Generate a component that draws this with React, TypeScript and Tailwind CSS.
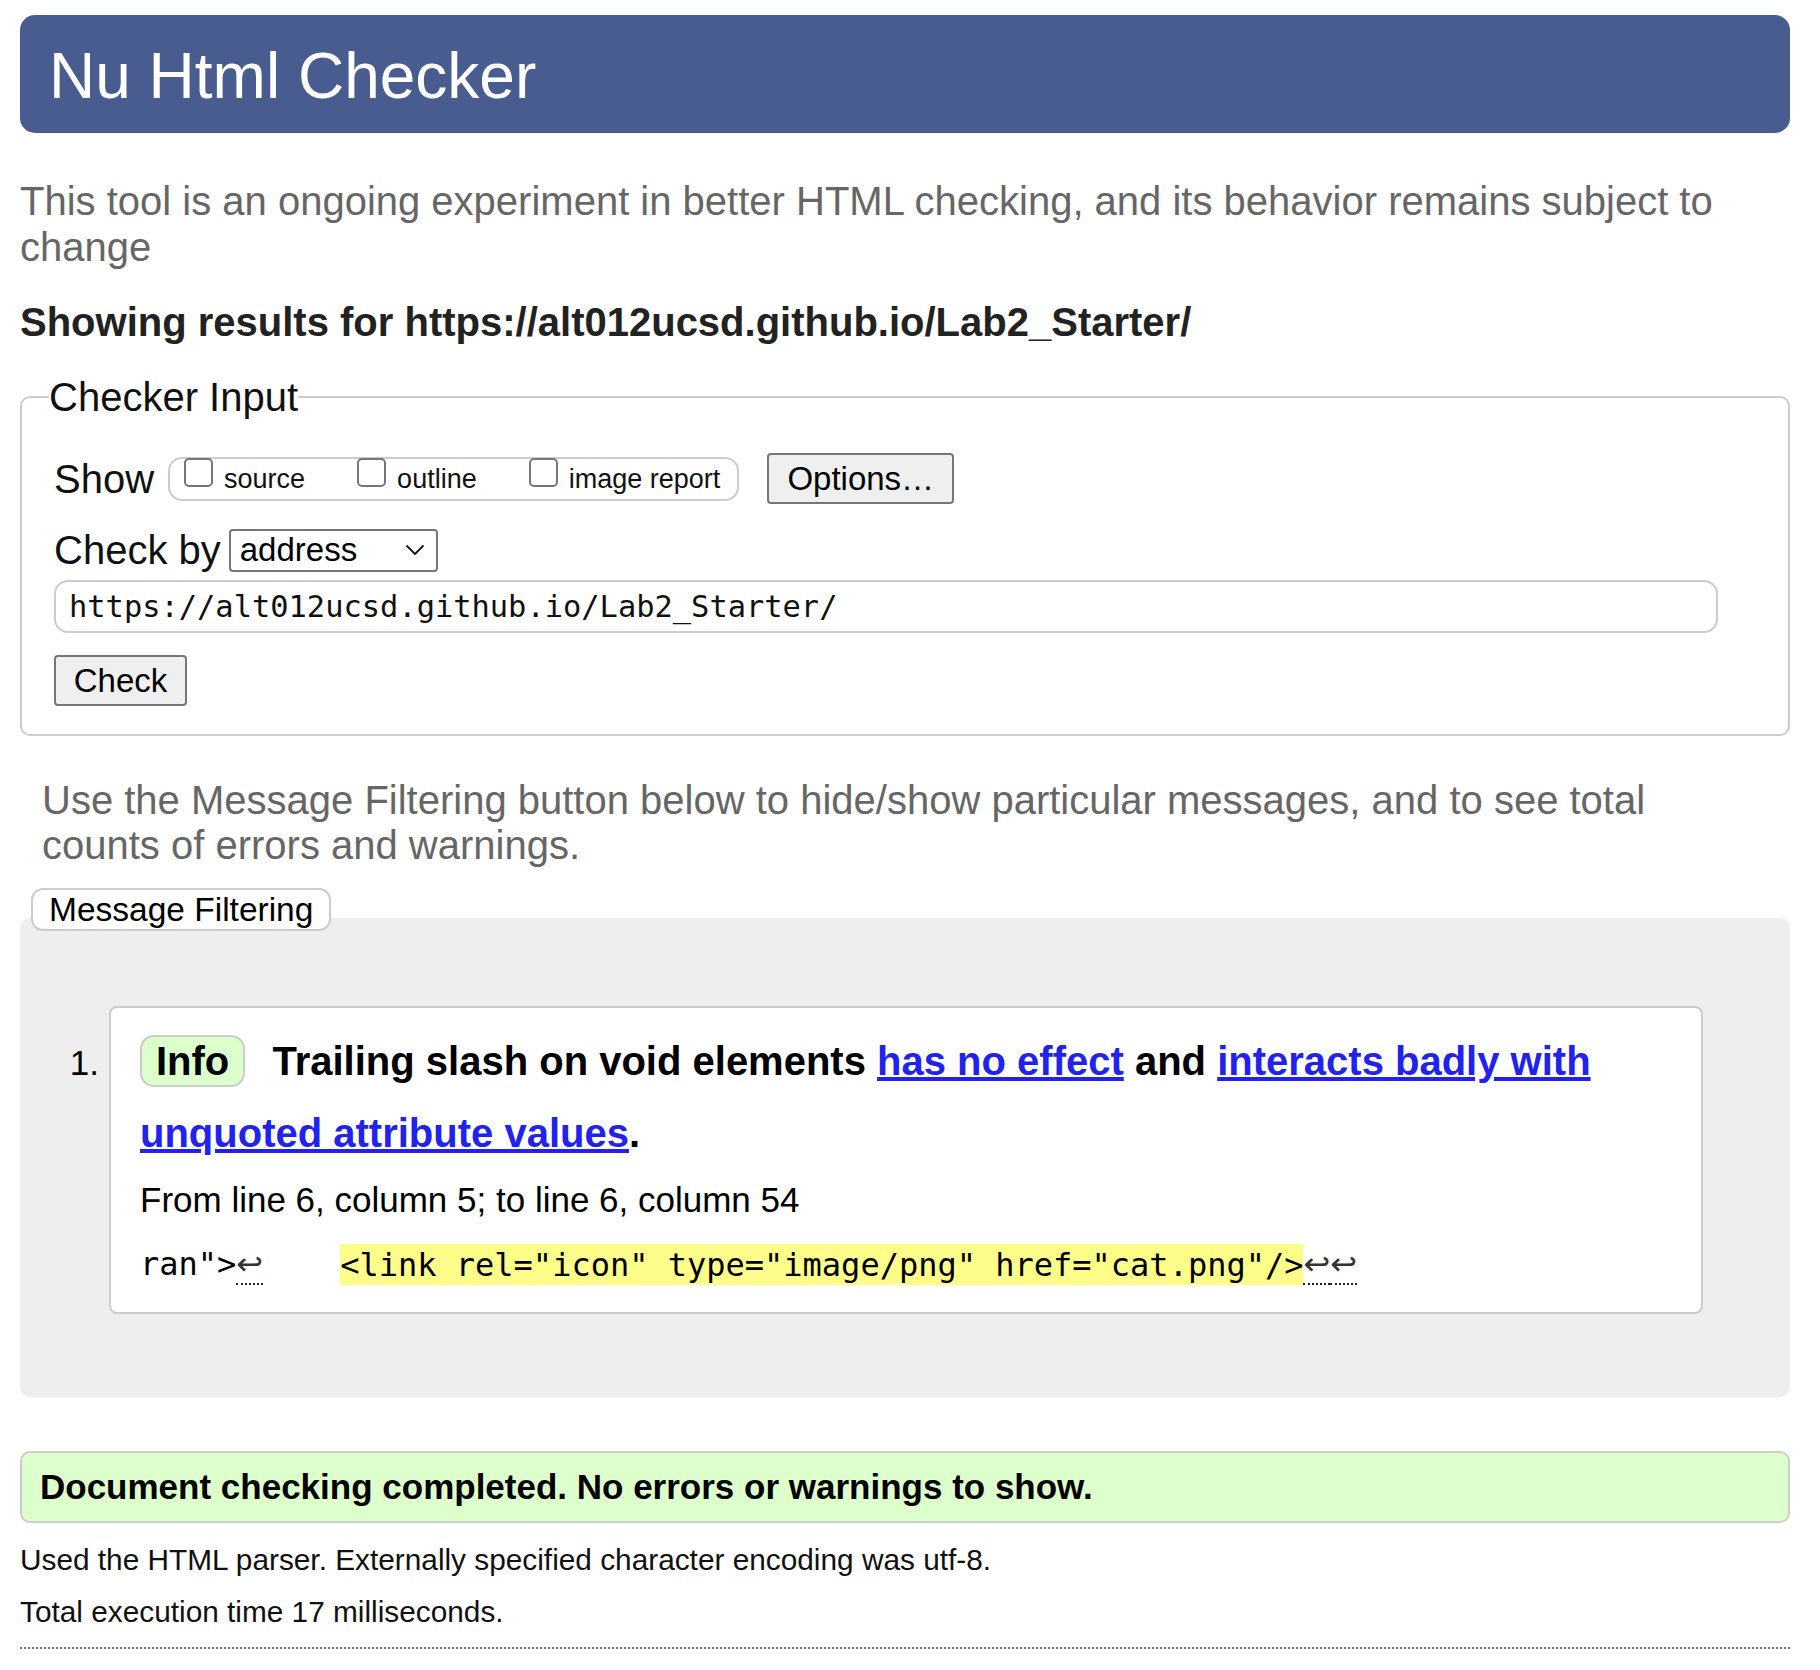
import React from "react";

const sans = "font-['Liberation_Sans',Arial,sans-serif]";
const mono = "font-['DejaVu_Sans_Mono',monospace]";

const ShowOption = ({ label, first }: { label: string; first?: boolean }) => (
  <label className={`flex items-start ${first ? "" : "ml-[52px]"}`}>
    <input
      type="checkbox"
      className="mt-[-1px] h-[29px] w-[29px] appearance-none rounded-[5px] border-2 border-[#767676] bg-white"
    />
    <span className="ml-[11px] mt-[5px] text-[27px] leading-[31px] text-[#111]">{label}</span>
  </label>
);

const LineBreak = () => (
  <span className="border-b-2 border-dotted border-[#222] font-['DejaVu_Sans',sans-serif] text-[#333]">↩</span>
);

export default function App() {
  return (
    <div className={`min-h-screen bg-white pl-[20px] pr-[30px] pt-[15px] pb-[20px] ${sans}`}>
      {/* Title bar */}
      <h1 className="h-[118px] rounded-[15px] bg-[#485c8f] pl-[29px] pt-[24px] text-[64px] leading-[74px] text-white">
        Nu Html Checker
      </h1>

      <p className="mt-[45px] text-[40px] leading-[46px] text-[#666]">
        This tool is an ongoing experiment in better HTML checking, and its behavior remains subject to
        change
      </p>

      <h2 className="mt-[29px] text-[40px] font-bold leading-[46px] text-[#222]">
        Showing results for https://alt012ucsd.github.io/Lab2_Starter/
      </h2>

      {/* Checker input */}
      <fieldset className="mt-[29px] rounded-[10px] border-2 border-[#ccc] pl-[32px] pr-[70px] pt-[33px] pb-[28px]">
        <legend className="-ml-[5px] text-[40px] leading-[46px] text-[#111]">Checker Input</legend>

        <div className="flex h-[51px] items-center">
          <span className="text-[40px] leading-[46px] text-[#111]">Show</span>
          <div className="ml-[14px] flex h-[44px] items-start rounded-[14px] border-2 border-[#ccc] pl-[14px] pr-[17px]">
            <ShowOption label="source" first />
            <ShowOption label="outline" />
            <ShowOption label="image report" />
          </div>
          <button className="ml-[28px] h-[51px] w-[187px] rounded-[4px] border-2 border-[#767676] bg-[#efefef] text-[33px] leading-[38px] text-black">
            Options…
          </button>
        </div>

        <div className="mt-[23px] flex h-[46px] items-center">
          <span className="text-[40px] leading-[46px] text-[#111]">Check by</span>
          <div className="ml-[8px] flex h-[43px] w-[209px] items-center justify-between rounded-[4px] border-2 border-[#767676] pl-[9px] pr-[11px] text-[33px] leading-[38px] text-black">
            <span>address</span>
            <svg width="20" height="12" viewBox="0 0 20 12" fill="none">
              <path d="M1.5 1.5 L10 10 L18.5 1.5" stroke="#111" strokeWidth="1.8" />
            </svg>
          </div>
        </div>

        <div
          className={`mt-[7px] flex h-[53px] w-full items-center rounded-[14px] border-2 border-[#ccc] pl-[13px] text-[30.4px] text-[#111] ${mono}`}
        >
          https://alt012ucsd.github.io/Lab2_Starter/
        </div>

        <button className="mt-[22px] block h-[51px] w-[133px] rounded-[4px] border-2 border-[#767676] bg-[#efefef] text-[33px] leading-[38px] text-black">
          Check
        </button>
      </fieldset>

      <p className="mt-[42px] px-[22px] text-[40px] leading-[45px] text-[#666]">
        Use the Message Filtering button below to hide/show particular messages, and to see total
        counts of errors and warnings.
      </p>

      {/* Messages */}
      <button className="relative z-10 ml-[11px] mt-[20px] block h-[43px] rounded-[12px] border-2 border-[#ccc] bg-white px-[16px] text-[33.5px] leading-[39px] text-black">
        Message Filtering
      </button>
      <div className="-mt-[13px] flex items-baseline rounded-[10px] bg-[#eee] pt-[88px] pb-[83px] pl-[49px] pr-[87px]">
        <span className="w-[40px] shrink-0 pr-[10px] text-right text-[35px] leading-[72px] text-black">1.</span>
        <div className="flex-1 rounded-[8px] border-2 border-[#ccc] bg-white pl-[29px] pr-[29px] pt-[17px] pb-[28px]">
          <p className="text-[40px] font-bold leading-[72px] text-black">
            <span className="mr-[16px] inline-block h-[52px] rounded-[14px] border-2 border-[#ccc] bg-[#ddffcc] px-[14px] leading-[48px]">
              Info
            </span>{" "}
            Trailing slash on void elements{" "}
            <a href="#" className="text-[#2222ee] underline">
              has no effect
            </a>{" "}
            and{" "}
            <a href="#" className="text-[#2222ee] underline">
              interacts badly with unquoted attribute values
            </a>
            .
          </p>
          <p className="mt-[11px] text-[35px] leading-[40px] text-black">
            From line 6, column 5; to line 6, column 54
          </p>
          <p className={`mt-[24px] whitespace-pre text-[32px] leading-[40px] text-black ${mono}`}>
            ran"&gt;
            <LineBreak />
            {"    "}
            <b className="bg-[#fdfd8a] py-[1.5px] font-normal">{'<link rel="icon" type="image/png" href="cat.png"/>'}</b>
            <LineBreak />
            <LineBreak />
          </p>
        </div>
      </div>

      {/* Summary */}
      <div className="mt-[54px] flex h-[72px] items-center rounded-[10px] border-2 border-[#ccc] bg-[#ddffcc] pl-[18px] text-[35px] font-bold text-black">
        Document checking completed. No errors or warnings to show.
      </div>
      <p className="mt-[20px] text-[29.8px] leading-[34px] text-[#111]">
        Used the HTML parser. Externally specified character encoding was utf-8.
      </p>
      <p className="mt-[18px] text-[29.8px] leading-[34px] text-[#111]">Total execution time 17 milliseconds.</p>
      <div className="mt-[18px] border-t-2 border-dotted border-[#777]" />
    </div>
  );
}
